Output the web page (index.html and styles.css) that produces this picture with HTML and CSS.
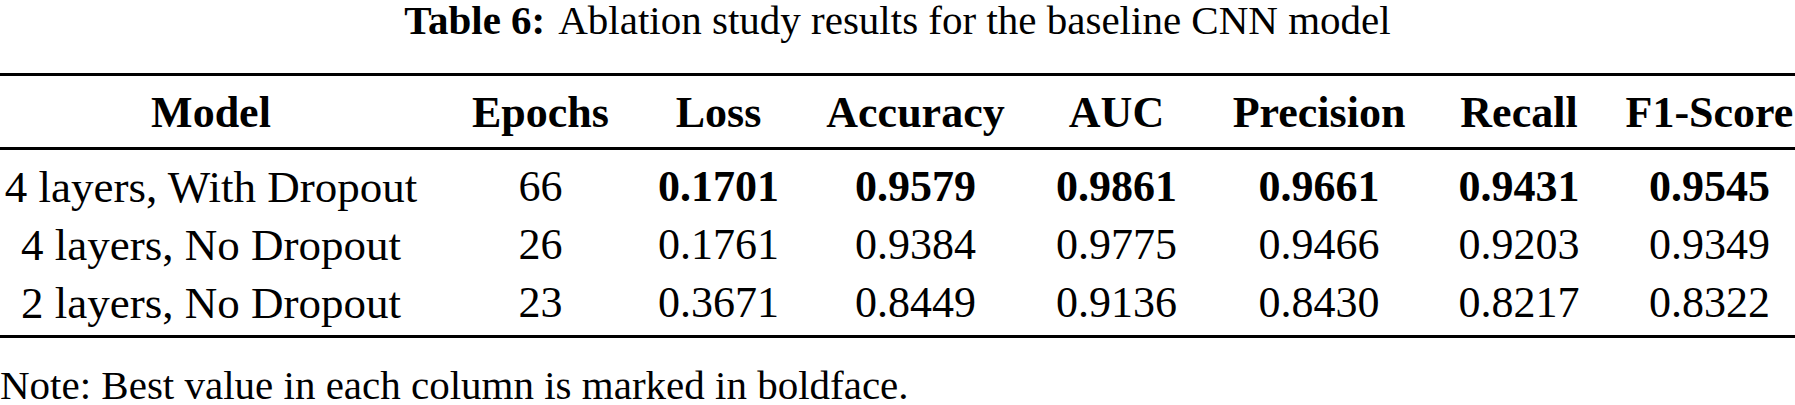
FILE: index.html
```html
<!DOCTYPE html>
<html lang="en">
<head>
  <meta charset="UTF-8">
  <title>Table 6: Ablation study results</title>
  <link rel="stylesheet" href="styles.css">
</head>
<body>
  <div class="caption"><b>Table 6:</b> Ablation study results for the baseline CNN model</div>

  <table class="results">
    <colgroup>
      <col class="c-model">
      <col class="c-epochs">
      <col class="c-loss">
      <col class="c-acc">
      <col class="c-auc">
      <col class="c-prec">
      <col class="c-recall">
      <col class="c-f1">
    </colgroup>
    <thead>
      <tr>
        <th>Model</th>
        <th>Epochs</th>
        <th>Loss</th>
        <th>Accuracy</th>
        <th>AUC</th>
        <th>Precision</th>
        <th>Recall</th>
        <th>F1-Score</th>
      </tr>
    </thead>
    <tbody>
      <tr>
        <td>4 layers, With Dropout</td>
        <td>66</td>
        <td class="best">0.1701</td>
        <td class="best">0.9579</td>
        <td class="best">0.9861</td>
        <td class="best">0.9661</td>
        <td class="best">0.9431</td>
        <td class="best">0.9545</td>
      </tr>
      <tr>
        <td>4 layers, No Dropout</td>
        <td>26</td>
        <td>0.1761</td>
        <td>0.9384</td>
        <td>0.9775</td>
        <td>0.9466</td>
        <td>0.9203</td>
        <td>0.9349</td>
      </tr>
      <tr>
        <td>2 layers, No Dropout</td>
        <td>23</td>
        <td>0.3671</td>
        <td>0.8449</td>
        <td>0.9136</td>
        <td>0.8430</td>
        <td>0.8217</td>
        <td>0.8322</td>
      </tr>
    </tbody>
  </table>

  <p class="note">Note: Best value in each column is marked in boldface.</p>
</body>
</html>
```

FILE: styles.css
```css
body {
  margin: 0;
  background: #fff;
  color: #000;
  font-family: "Liberation Serif", "Times New Roman", serif;
}

.caption {
  font-size: 41px;
  line-height: 41px;
  text-align: center;
  margin-bottom: 32px;
}

.caption b {
  margin-right: 5px;
}

.results {
  width: 1795px;
  table-layout: fixed;
  border-collapse: separate;
  border-spacing: 0;
  font-size: 44px;
}

.c-model { width: 446px; }
.c-epochs { width: 189px; }
.c-loss { width: 167px; }
.c-acc { width: 227px; }
.c-auc { width: 175px; }
.c-prec { width: 230px; }
.c-recall { width: 170px; }
.c-f1 { width: 191px; }

.results th,
.results td {
  padding: 0;
  line-height: 58px;
  text-align: center;
  white-space: nowrap;
}

.results th {
  font-weight: bold;
  padding: 8px 0 5px;
  border-top: 3px solid #000;
  border-bottom: 3px solid #000;
}

.results th:first-child,
.results td:first-child {
  padding-right: 24px;
}

.results td:first-child {
  font-size: 45px;
}

.results th:last-child,
.results td:last-child {
  padding-left: 20px;
}

.results tbody tr:first-child td {
  padding-top: 8px;
}

.results tbody tr:last-child td {
  padding-bottom: 3px;
  border-bottom: 3px solid #000;
}

.results td.best {
  font-weight: bold;
}

.note {
  margin: 28px 0 0;
  font-size: 41px;
  line-height: 38px;
}
```
